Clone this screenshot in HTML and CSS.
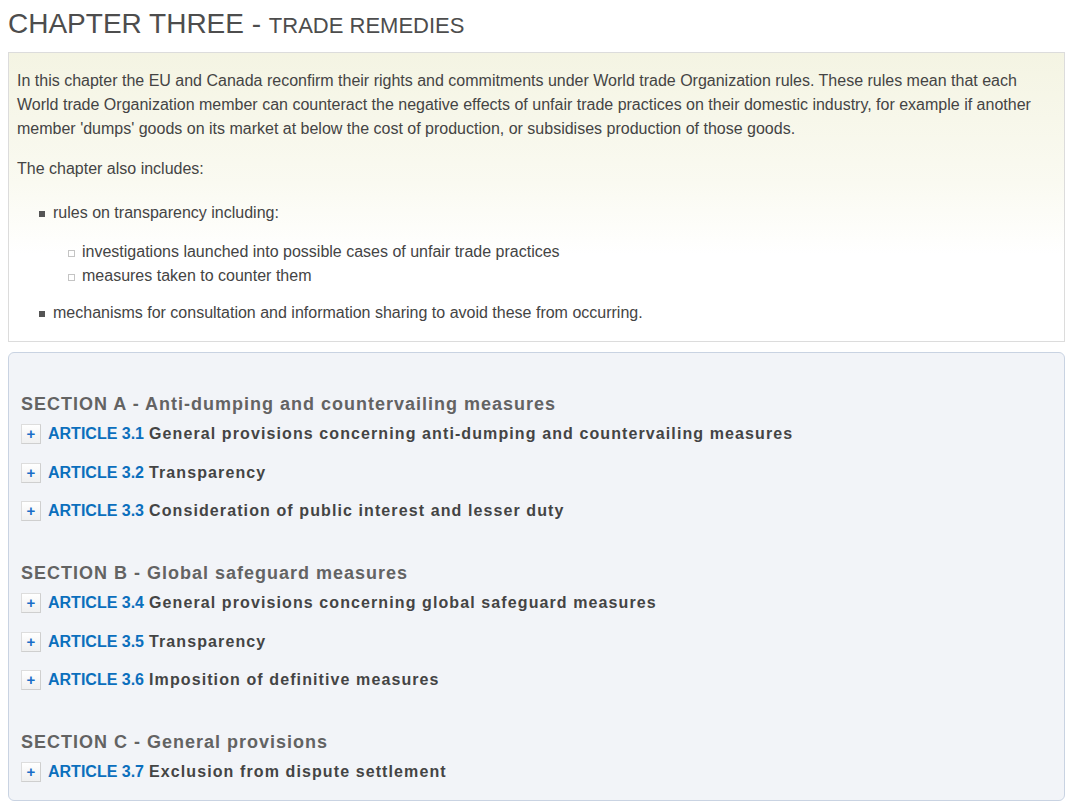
FILE: index.html
```html
<!DOCTYPE html>
<html lang="en">
<head>
<meta charset="utf-8">
<title>Chapter Three - Trade Remedies</title>
<link rel="stylesheet" href="styles.css">
</head>
<body>
<h1 class="chapter-title">CHAPTER THREE - <span class="chapter-sub">TRADE REMEDIES</span></h1>

<div class="intro">
  <p>In this chapter the EU and Canada reconfirm their rights and commitments under World trade Organization rules. These rules mean that each World trade Organization member can counteract the negative effects of unfair trade practices on their domestic industry, for example if another member 'dumps' goods on its market at below the cost of production, or subsidises production of those goods.</p>
  <p>The chapter also includes:</p>
  <ul class="list">
    <li>rules on transparency including:
      <ul class="sublist">
        <li>investigations launched into possible cases of unfair trade practices</li>
        <li>measures taken to counter them</li>
      </ul>
    </li>
    <li>mechanisms for consultation and information sharing to avoid these from occurring.</li>
  </ul>
</div>

<div class="sections">
  <div class="section">
    <h3 class="section-title">SECTION A - Anti-dumping and countervailing measures</h3>
    <div class="article"><span class="toggle">+</span><span class="art-num">ARTICLE 3.1</span><span class="art-title">General provisions concerning anti-dumping and countervailing measures</span></div>
    <div class="article"><span class="toggle">+</span><span class="art-num">ARTICLE 3.2</span><span class="art-title">Transparency</span></div>
    <div class="article"><span class="toggle">+</span><span class="art-num">ARTICLE 3.3</span><span class="art-title">Consideration of public interest and lesser duty</span></div>
  </div>
  <div class="section">
    <h3 class="section-title">SECTION B - Global safeguard measures</h3>
    <div class="article"><span class="toggle">+</span><span class="art-num">ARTICLE 3.4</span><span class="art-title">General provisions concerning global safeguard measures</span></div>
    <div class="article"><span class="toggle">+</span><span class="art-num">ARTICLE 3.5</span><span class="art-title">Transparency</span></div>
    <div class="article"><span class="toggle">+</span><span class="art-num">ARTICLE 3.6</span><span class="art-title">Imposition of definitive measures</span></div>
  </div>
  <div class="section">
    <h3 class="section-title">SECTION C - General provisions</h3>
    <div class="article"><span class="toggle">+</span><span class="art-num">ARTICLE 3.7</span><span class="art-title">Exclusion from dispute settlement</span></div>
  </div>
</div>
</body>
</html>
```

FILE: styles.css
```css
html, body {
  background: #ffffff;
}
body {
  margin: 8px 10px 8px 8px;
  font-family: "Liberation Sans", Arial, sans-serif;
  color: #444444;
}
.chapter-title {
  margin: 0 0 12px;
  font-size: 28px;
  line-height: 32px;
  font-weight: normal;
  color: #4d4d4d;
}
.chapter-sub {
  font-size: 22px;
  line-height: 20px;
}
.intro {
  border: 1px solid #dcdcdc;
  padding: 0 8px;
  background: linear-gradient(to bottom, #f4f4e3 0%, #fafaf1 45%, #ffffff 70%);
  font-size: 16px;
  line-height: 24px;
}
.intro p {
  margin: 16px 0;
}
.list {
  list-style: none;
  margin: 20px 0 16px;
  padding: 0 0 0 36px;
}
.list > li {
  position: relative;
}
.list > li::before {
  content: "";
  position: absolute;
  left: -14px;
  top: 10px;
  width: 6px;
  height: 6px;
  background: #555555;
}
.sublist {
  list-style: none;
  margin: 15px 0 13px;
  padding: 0 0 0 29px;
}
.sublist > li {
  position: relative;
}
.sublist > li::before {
  content: "";
  position: absolute;
  left: -14px;
  top: 10px;
  width: 5px;
  height: 5px;
  border: 1px solid #c4c4c4;
  background: transparent;
}
.sections {
  margin-top: 10px;
  border: 1px solid #c9d3e2;
  border-radius: 6px;
  background: #f2f4f8;
  padding: 39px 12px 7px;
}
.section + .section {
  margin-top: 29.5px;
}
.section-title {
  margin: 0;
  font-size: 18px;
  line-height: 24px;
  font-weight: bold;
  letter-spacing: 1px;
  color: #636363;
}
.article {
  display: flex;
  align-items: center;
  height: 20px;
  padding: 8px 0 10.5px;
  font-size: 16px;
  font-weight: bold;
}
.toggle {
  box-sizing: border-box;
  width: 20px;
  height: 20px;
  margin-right: 7px;
  border: 1px solid #dddddd;
  border-right-color: #cfcfcf;
  border-bottom-color: #cfcfcf;
  background: linear-gradient(to bottom, #ffffff, #f0f0f0);
  color: #1a6fc8;
  font-size: 15px;
  font-weight: bold;
  line-height: 18px;
  text-align: center;
}
.art-num {
  color: #0b6fbd;
  margin-right: 5px;
}
.art-title {
  color: #444444;
  letter-spacing: 1.1px;
}
```
